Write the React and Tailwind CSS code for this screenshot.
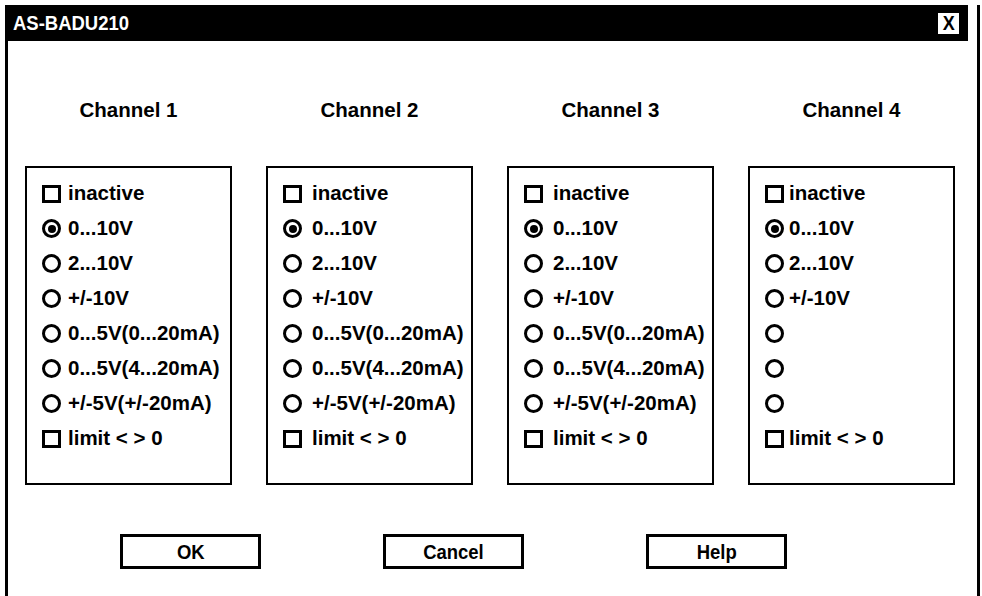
import React from "react";

const channels = [
  {
    name: "Channel 1",
    gap: "gap-[7px]",
    options: ["0...10V", "2...10V", "+/-10V", "0...5V(0...20mA)", "0...5V(4...20mA)", "+/-5V(+/-20mA)"],
  },
  {
    name: "Channel 2",
    gap: "gap-[10px]",
    options: ["0...10V", "2...10V", "+/-10V", "0...5V(0...20mA)", "0...5V(4...20mA)", "+/-5V(+/-20mA)"],
  },
  {
    name: "Channel 3",
    gap: "gap-[10px]",
    options: ["0...10V", "2...10V", "+/-10V", "0...5V(0...20mA)", "0...5V(4...20mA)", "+/-5V(+/-20mA)"],
  },
  {
    name: "Channel 4",
    gap: "gap-[5px]",
    options: ["0...10V", "2...10V", "+/-10V", "", "", ""],
  },
];

const CheckBox = () => (
  <span className="inline-block w-[19px] h-[18px] border-[3px] border-black shrink-0" />
);

const Radio = ({ checked }) => (
  <span className="w-[19px] h-[19px] rounded-full border-[3px] border-black shrink-0 flex items-center justify-center">
    {checked && <span className="w-[8px] h-[8px] rounded-full bg-black" />}
  </span>
);

const Row = ({ gap, children, label }) => (
  <div className={`h-[35px] flex items-center ${gap}`}>
    {children}
    <span>{label}</span>
  </div>
);

const ChannelBox = ({ ch }) => (
  <div className="flex flex-col items-center">
    <div className="h-[23px] leading-[23px] mt-[57px] mb-[45px]">{ch.name}</div>
    <div className="w-[207px] h-[319px] border-2 border-black pt-[8px] pl-[15px]">
      <Row gap={ch.gap} label="inactive">
        <CheckBox />
      </Row>
      {ch.options.map((o, i) => (
        <Row key={i} gap={ch.gap} label={o}>
          <Radio checked={i === 0} />
        </Row>
      ))}
      <Row gap={ch.gap} label="limit < > 0">
        <CheckBox />
      </Row>
    </div>
  </div>
);

const Button = ({ children }) => (
  <div className="w-[141px] h-[35px] border-[3px] border-black flex items-center justify-center text-[21px]">
    <span className="inline-block scale-x-[0.88]">{children}</span>
  </div>
);

export default function App() {
  return (
    <div className="w-[982px] h-[596px] bg-white overflow-hidden font-['Liberation_Sans',Arial,sans-serif] font-bold text-black text-[20.5px]">
      <div className="ml-[5px] mt-[8px] w-[975px] h-[600px] border-l-[3px] border-r-[3px] border-black">
        <div className="-mt-[3px] -ml-[3px] w-[963px] h-[36px] bg-black flex items-center justify-between pl-[8px] pr-[9px]">
          <span className="text-white text-[21px] inline-block origin-left scale-x-[0.88]">AS-BADU210</span>
          <span className="w-[21px] h-[21px] bg-white flex items-center justify-center text-[20px] leading-none">
            <span className="inline-block scale-x-[0.9]">X</span>
          </span>
        </div>
        <div className="grid grid-cols-[207px_207px_207px_207px] gap-x-[34px] pl-[17px]">
          {channels.map((ch) => (
            <ChannelBox key={ch.name} ch={ch} />
          ))}
        </div>
        <div className="flex gap-[122px] pl-[112px] mt-[49px]">
          <Button>OK</Button>
          <Button>Cancel</Button>
          <Button>Help</Button>
        </div>
      </div>
    </div>
  );
}
